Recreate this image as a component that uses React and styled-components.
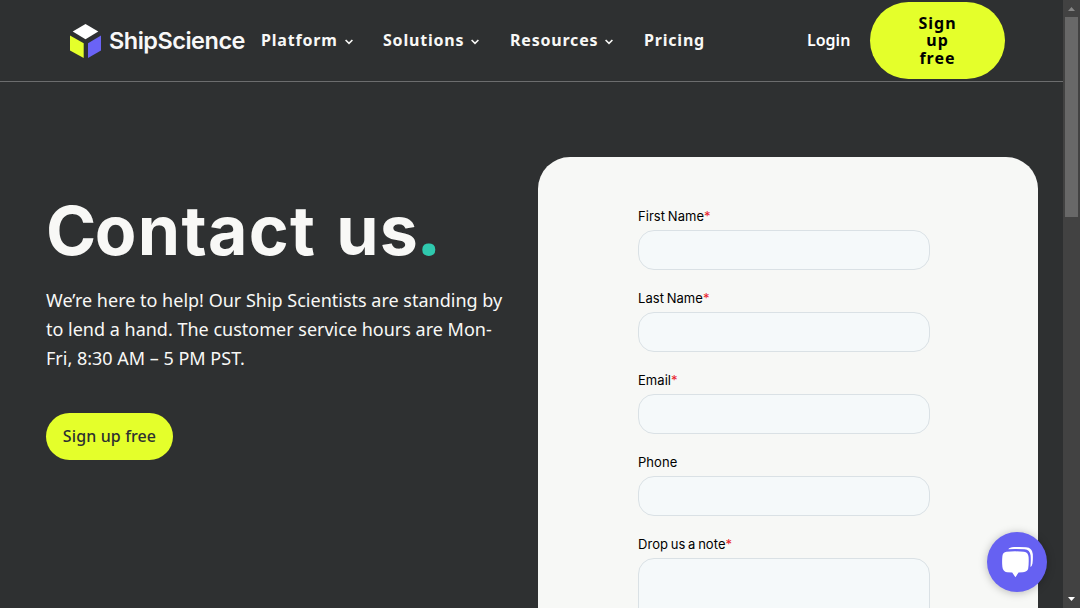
import React from "react";
import styled, { createGlobalStyle } from "styled-components";

const GlobalStyle = createGlobalStyle`
  *, *::before, *::after { box-sizing: border-box; }
  html, body { margin: 0; overflow: hidden; background: #2e3031; }
  body { font-family: "Noto Sans", sans-serif; color: #f8f8f6; }
`;

const Window = styled.div`
  position: relative;
  display: flex;
  width: 1080px;
  height: 608px;
  overflow: hidden;
`;

const Page = styled.div`
  display: flex;
  flex-direction: column;
  width: 1063px;
  height: 100%;
  background: #2e3031;
`;

const Header = styled.header`
  display: flex;
  align-items: center;
  flex: none;
  height: 82px;
  padding-left: 70px;
  border-bottom: 1px solid #6c6d6e;
`;

const Logo = styled.a`
  display: flex;
  align-items: center;
  width: 191px;
  flex: none;
`;

const LogoMark = styled.svg`
  width: 31px;
  height: 34px;
  margin-right: 8px;
`;

const LogoText = styled.span`
  padding-top: 1px;
  font: 600 23.5px/30px "Inter", sans-serif;
  letter-spacing: -0.5px;
  color: #f8f8f8;
  white-space: nowrap;
`;

const Nav = styled.nav`
  display: flex;
  flex: none;
  width: 546px;
  padding-bottom: 2px;
`;

const NavItem = styled.a`
  display: flex;
  align-items: center;
  flex: none;
  width: ${(p) => p.$width}px;
  font-size: 16px;
  font-weight: 700;
  line-height: 24px;
  letter-spacing: 0.8px;
  white-space: nowrap;
`;

const Chevron = styled.svg`
  width: 8px;
  height: 6px;
  margin: 5px 0 0 7px;
`;

const Login = styled.a`
  flex: none;
  width: 63px;
  padding-bottom: 2px;
  font-size: 16px;
  font-weight: 600;
  line-height: 24px;
  color: #fff;
`;

const HeaderButton = styled.button`
  flex: none;
  width: 135px;
  height: 77px;
  padding: 1px 45px 0;
  border: 0;
  border-radius: 39px;
  background: #e4ff2b;
  color: #000;
  font: 700 16px/17.6px "Noto Sans", sans-serif;
  letter-spacing: 1px;
`;

const Main = styled.main`
  display: flex;
  flex: 1;
  min-height: 0;
  padding: 74.5px 25px 0 46px;
`;

const Intro = styled.section`
  flex: none;
  width: 492px;
  padding-top: 39.5px;
`;

const Title = styled.h1`
  margin: 0;
  font: 700 68px/68px "Inter", sans-serif;
  letter-spacing: 1.3px;
  word-spacing: 2.5px;
  white-space: nowrap;
  &::first-letter { letter-spacing: -1.5px; }
`;

const TitleDot = styled.span`
  font-family: "Noto Sans", sans-serif;
  font-size: 75px;
  line-height: 0;
  margin-left: -1px;
  color: #2fc9ae;
`;

const Lead = styled.p`
  width: 470px;
  margin: 22px 0 0;
  font-size: 18px;
  line-height: 29px;
`;

const SignUp = styled.button`
  display: block;
  width: 127px;
  height: 47px;
  margin-top: 40px;
  padding: 0 0 1px;
  border: 0;
  border-radius: 24px;
  background: #e4ff2b;
  color: #2e3031;
  font: 500 16px/24px "Noto Sans", sans-serif;
  letter-spacing: 0.12px;
`;

const FormCard = styled.form`
  flex: none;
  width: 500px;
  padding: 49.5px 108px 0 100px;
  border-radius: 32px 32px 0 0;
  background: #f7f8f6;
  overflow: hidden;
`;

const Field = styled.label`
  display: block;
  height: 82px;
  color: #000;
  font: 400 13px/20px "Inter", sans-serif;
  letter-spacing: 0.05px;
  word-spacing: -1px;
`;

const Required = styled.span`
  color: #e8202a;
`;

const Input = styled.span`
  display: block;
  width: 292px;
  height: ${(p) => (p.$tall ? 120 : 40)}px;
  margin-top: 4.4px;
  border: 1px solid #dae1e5;
  border-radius: 16px;
  background: #f5f9fa;
`;

const Scrollbar = styled.aside`
  display: flex;
  flex-direction: column;
  align-items: center;
  width: 17px;
  height: 100%;
  background: #424242;
`;

const Arrow = styled.svg`
  width: 17px;
  height: 17px;
  flex: none;
`;

const Thumb = styled.div`
  width: 13px;
  height: 200px;
  margin-bottom: auto;
  background: #686868;
`;

const ChatButton = styled.button`
  position: absolute;
  right: 33px;
  bottom: 16px;
  width: 60px;
  height: 60px;
  padding: 0;
  border: 0;
  border-radius: 50%;
  background: #6661f2;
  box-shadow: 0 1px 8px rgba(0, 0, 0, 0.25);
  svg { display: block; }
`;

const navItems = [
  { label: "Platform", width: 122, menu: true },
  { label: "Solutions", width: 127, menu: true },
  { label: "Resources", width: 134, menu: true },
  { label: "Pricing", width: 70 },
];

const fields = [
  { label: "First Name", required: true },
  { label: "Last Name", required: true },
  { label: "Email", required: true },
  { label: "Phone" },
  { label: "Drop us a note", required: true, tall: true },
];

export default function App() {
  return (
    <Window>
      <GlobalStyle />
      <Page>
        <Header>
          <Logo>
            <LogoMark viewBox="0 0 31 34">
              <path d="M15.5 0 28.3 7.5 15.5 15.2 2.7 7.5Z" fill="#fff" />
              <path d="M0 11.5 13.7 19.3V34L0 26.5Z" fill="#e4ff2b" />
              <path d="M31 11.5 18 19.3V34L31 26.5Z" fill="#6a63f6" />
            </LogoMark>
            <LogoText>ShipScience</LogoText>
          </Logo>
          <Nav>
            {navItems.map((item) => (
              <NavItem key={item.label} $width={item.width}>
                {item.label}
                {item.menu && (
                  <Chevron viewBox="0 0 8 6" fill="none" stroke="#f8f8f6" strokeWidth="1.6">
                    <path d="M0.6 1 4 4.4 7.4 1" />
                  </Chevron>
                )}
              </NavItem>
            ))}
          </Nav>
          <Login>Login</Login>
          <HeaderButton>Sign up free</HeaderButton>
        </Header>
        <Main>
          <Intro>
            <Title>
              Contact us<TitleDot>.</TitleDot>
            </Title>
            <Lead>
              We’re here to help! Our Ship Scientists are standing by to lend a hand. The customer
              service hours are Mon-Fri, 8:30 AM – 5 PM PST.
            </Lead>
            <SignUp>Sign up free</SignUp>
          </Intro>
          <FormCard>
            {fields.map((field) => (
              <Field key={field.label}>
                {field.label}
                {field.required && <Required>*</Required>}
                <Input $tall={field.tall} />
              </Field>
            ))}
          </FormCard>
        </Main>
      </Page>
      <Scrollbar>
        <Arrow viewBox="0 0 17 17">
          <path d="M5 11 8.5 7 12 11Z" fill="#868686" />
        </Arrow>
        <Thumb />
        <Arrow viewBox="0 0 17 17">
          <path d="M5 6 8.5 10 12 6Z" fill="#fff" />
        </Arrow>
      </Scrollbar>
      <ChatButton aria-label="Chat">
        <svg width="60" height="60" viewBox="0 0 60 60" fill="#fff">
          <path d="M19.5 19.8Q28 18.9 37 19.8Q41.2 20.4 41.6 25Q42 31 41.2 36.5Q40.5 39.8 36 40.3L31.6 40.6 28.4 45.2 25.2 40.6 20 40.2Q15.9 39.6 15.4 35Q14.8 30 15.4 24Q15.9 20.3 19.5 19.8Z" />
          <path d="M21.3 17.2Q22.5 15.4 27 15.1Q33 14.7 39 15.2Q45.3 15.7 45.8 22Q46.1 27 45.5 31.5Q45 34.3 43.4 35Q44 29 43.6 23.5Q43 17.9 37.5 17.3Q29 16.9 21.3 17.2Z" />
        </svg>
      </ChatButton>
    </Window>
  );
}
